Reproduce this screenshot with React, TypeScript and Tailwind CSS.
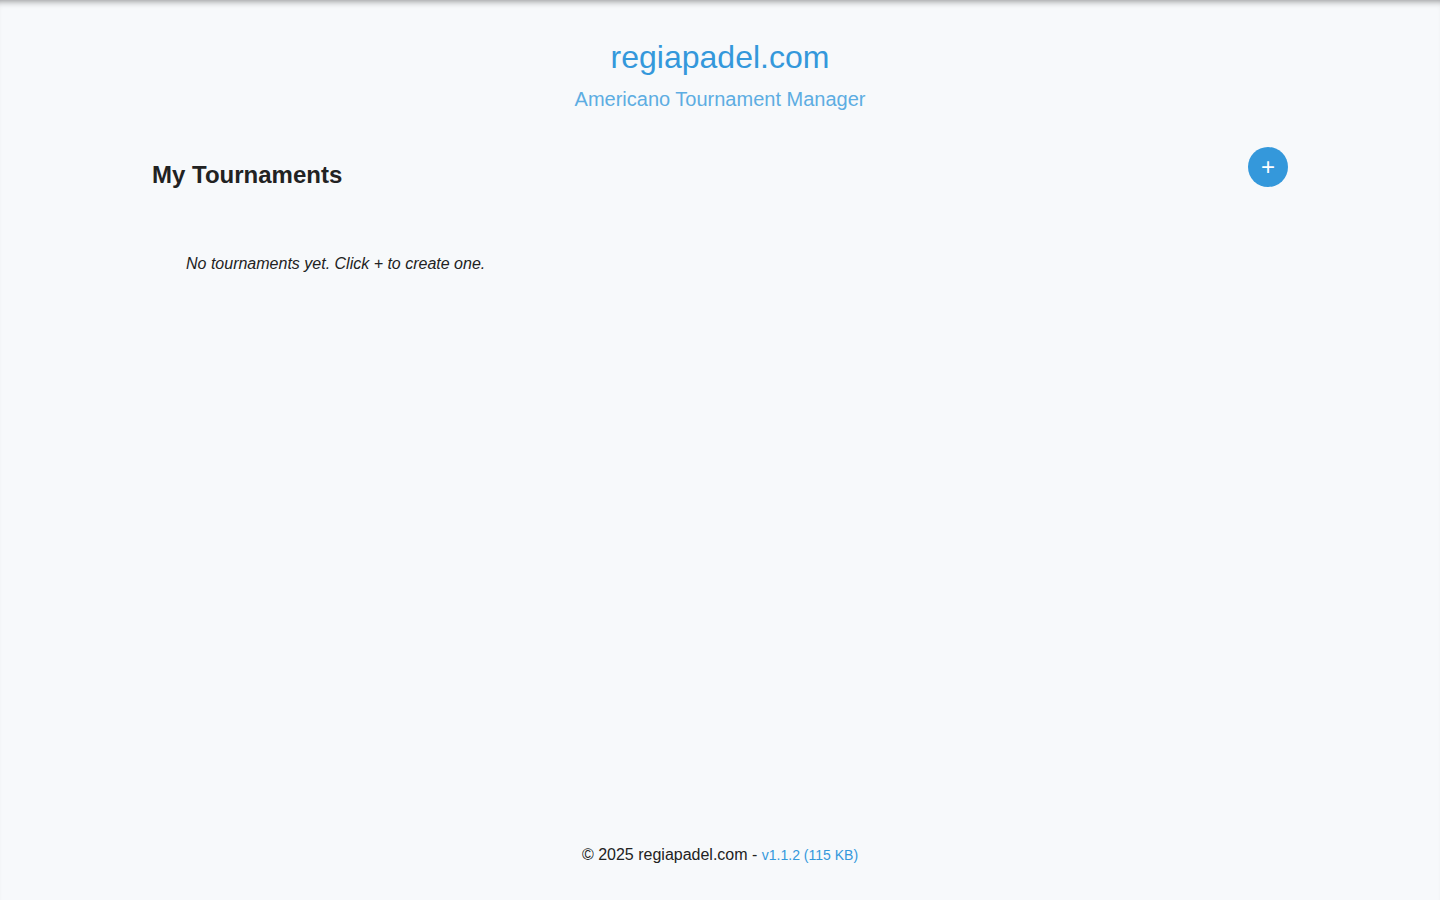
export default function App() {
  return (
    <div className="min-h-screen flex flex-col bg-[#f7f9fb] text-[#222] font-['Liberation_Sans',Arial,sans-serif] shadow-[inset_0_7px_7px_-6px_rgba(0,0,0,0.45)]">
      {/* Header */}
      <header className="pt-[37px] text-center">
        <h1 className="text-[32px] leading-[40px] text-[#3498db]">regiapadel.com</h1>
        <p className="mt-[8px] text-[20px] leading-[28px] text-[#5dade2]">Americano Tournament Manager</p>
      </header>

      {/* Tournaments */}
      <main className="flex-1 w-full max-w-[1136px] mx-auto">
        <div className="mt-[34px] flex items-start justify-between">
          <h2 className="mt-[12px] text-[24px] leading-[32px] font-bold text-[#222]">My Tournaments</h2>
          <button className="w-10 h-10 rounded-full bg-[#3498db] text-white text-[24px] leading-none flex items-center justify-center">
            +
          </button>
        </div>
        <p className="mt-[61px] pl-[34px] text-[16px] leading-[24px] italic text-[#222]">
          No tournaments yet. Click + to create one.
        </p>
      </main>

      {/* Footer */}
      <footer className="pb-[33px] text-center text-[16px] leading-[24px] text-[#222]">
        © 2025 regiapadel.com - <span className="text-[14px] text-[#3498db]">v1.1.2 (115 KB)</span>
      </footer>
    </div>
  );
}
